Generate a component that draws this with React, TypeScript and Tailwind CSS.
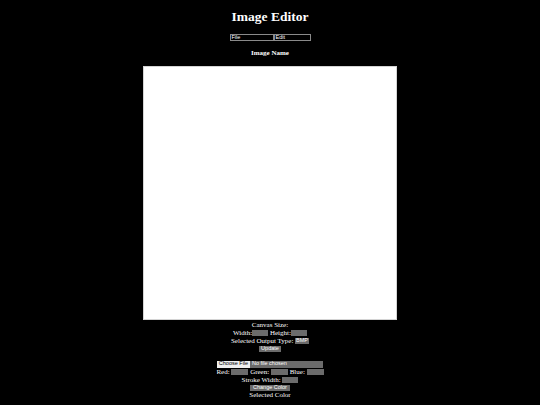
import React from 'react'

const serif = { fontFamily: '"Liberation Serif", "Times New Roman", serif' }

function Field({ w }: { w: string }) {
  return <span className={`inline-block h-[6px] ${w} bg-[#6b6b6b] align-middle`} />
}

function Btn({ label, className = '' }: { label: string; className?: string }) {
  return (
    <span
      className={`inline-flex items-center justify-center h-[6px] bg-[#6b6b6b] text-white text-[5.5px] leading-none align-middle font-['Liberation_Sans',Arial,sans-serif] ${className}`}
    >
      {label}
    </span>
  )
}

export default function App() {
  return (
    <div className="h-[405px] w-full bg-black text-white flex flex-col items-center" style={serif}>
      <h1 className="pt-[9px] h-[25px] text-[13.5px] leading-[16px] font-bold">Image Editor</h1>

      <div className="mt-[9px] flex font-['Liberation_Sans',Arial,sans-serif] text-[5.5px] leading-none">
        <div className="w-[44px] h-[7px] border border-[#8a8a8a] bg-black px-[1px] flex items-center">File</div>
        <div className="w-[37px] h-[7px] border border-[#8a8a8a] bg-black px-[1px] flex items-center">Edit</div>
      </div>

      <h4 className="mt-[8px] h-[8px] text-[7px] leading-[8px] font-bold">Image Name</h4>

      <div className="mt-[9px] w-[254px] h-[254px] bg-white border border-[#d4d4d4]" />

      <div className="mt-[1px] flex flex-col items-center text-[7px] leading-[8px]">
        <div className="h-[8px]">Canvas Size:</div>
        <div className="h-[8px] flex items-center">
          Width:<Field w="w-[16px]" />&nbsp;Height:<Field w="w-[16px]" />
        </div>
        <div className="h-[8px] flex items-center">
          Selected Output Type:&nbsp;
          <span className="inline-flex items-center h-[6px] px-[1px] bg-[#6b6b6b] text-[5.5px] leading-none font-['Liberation_Sans',Arial,sans-serif]">
            BMP
          </span>
        </div>
        <div className="h-[8px] flex items-center">
          <Btn label="Update" className="w-[22px]" />
        </div>

        <div className="mt-[7px] h-[8px] flex items-center">
          <span className="inline-flex h-[7px] w-[106px] bg-[#6b6b6b] text-[5.5px] leading-none font-['Liberation_Sans',Arial,sans-serif]">
            <span className="w-[33px] bg-[#efefef] text-black flex items-center justify-center">Choose File</span>
            <span className="flex items-center pl-[2px]">No file chosen</span>
          </span>
        </div>
        <div className="h-[8px] flex items-center">
          Red:&nbsp;<Field w="w-[17px]" />&nbsp;Green:&nbsp;<Field w="w-[17px]" />&nbsp;Blue:&nbsp;<Field w="w-[17px]" />
        </div>
        <div className="h-[8px] flex items-center">
          Stroke Width:&nbsp;<Field w="w-[16px]" />
        </div>
        <div className="h-[7px] flex items-center">
          <Btn label="Change Color" className="w-[40px]" />
        </div>
        <div className="h-[8px]">Selected Color</div>
      </div>
    </div>
  )
}
